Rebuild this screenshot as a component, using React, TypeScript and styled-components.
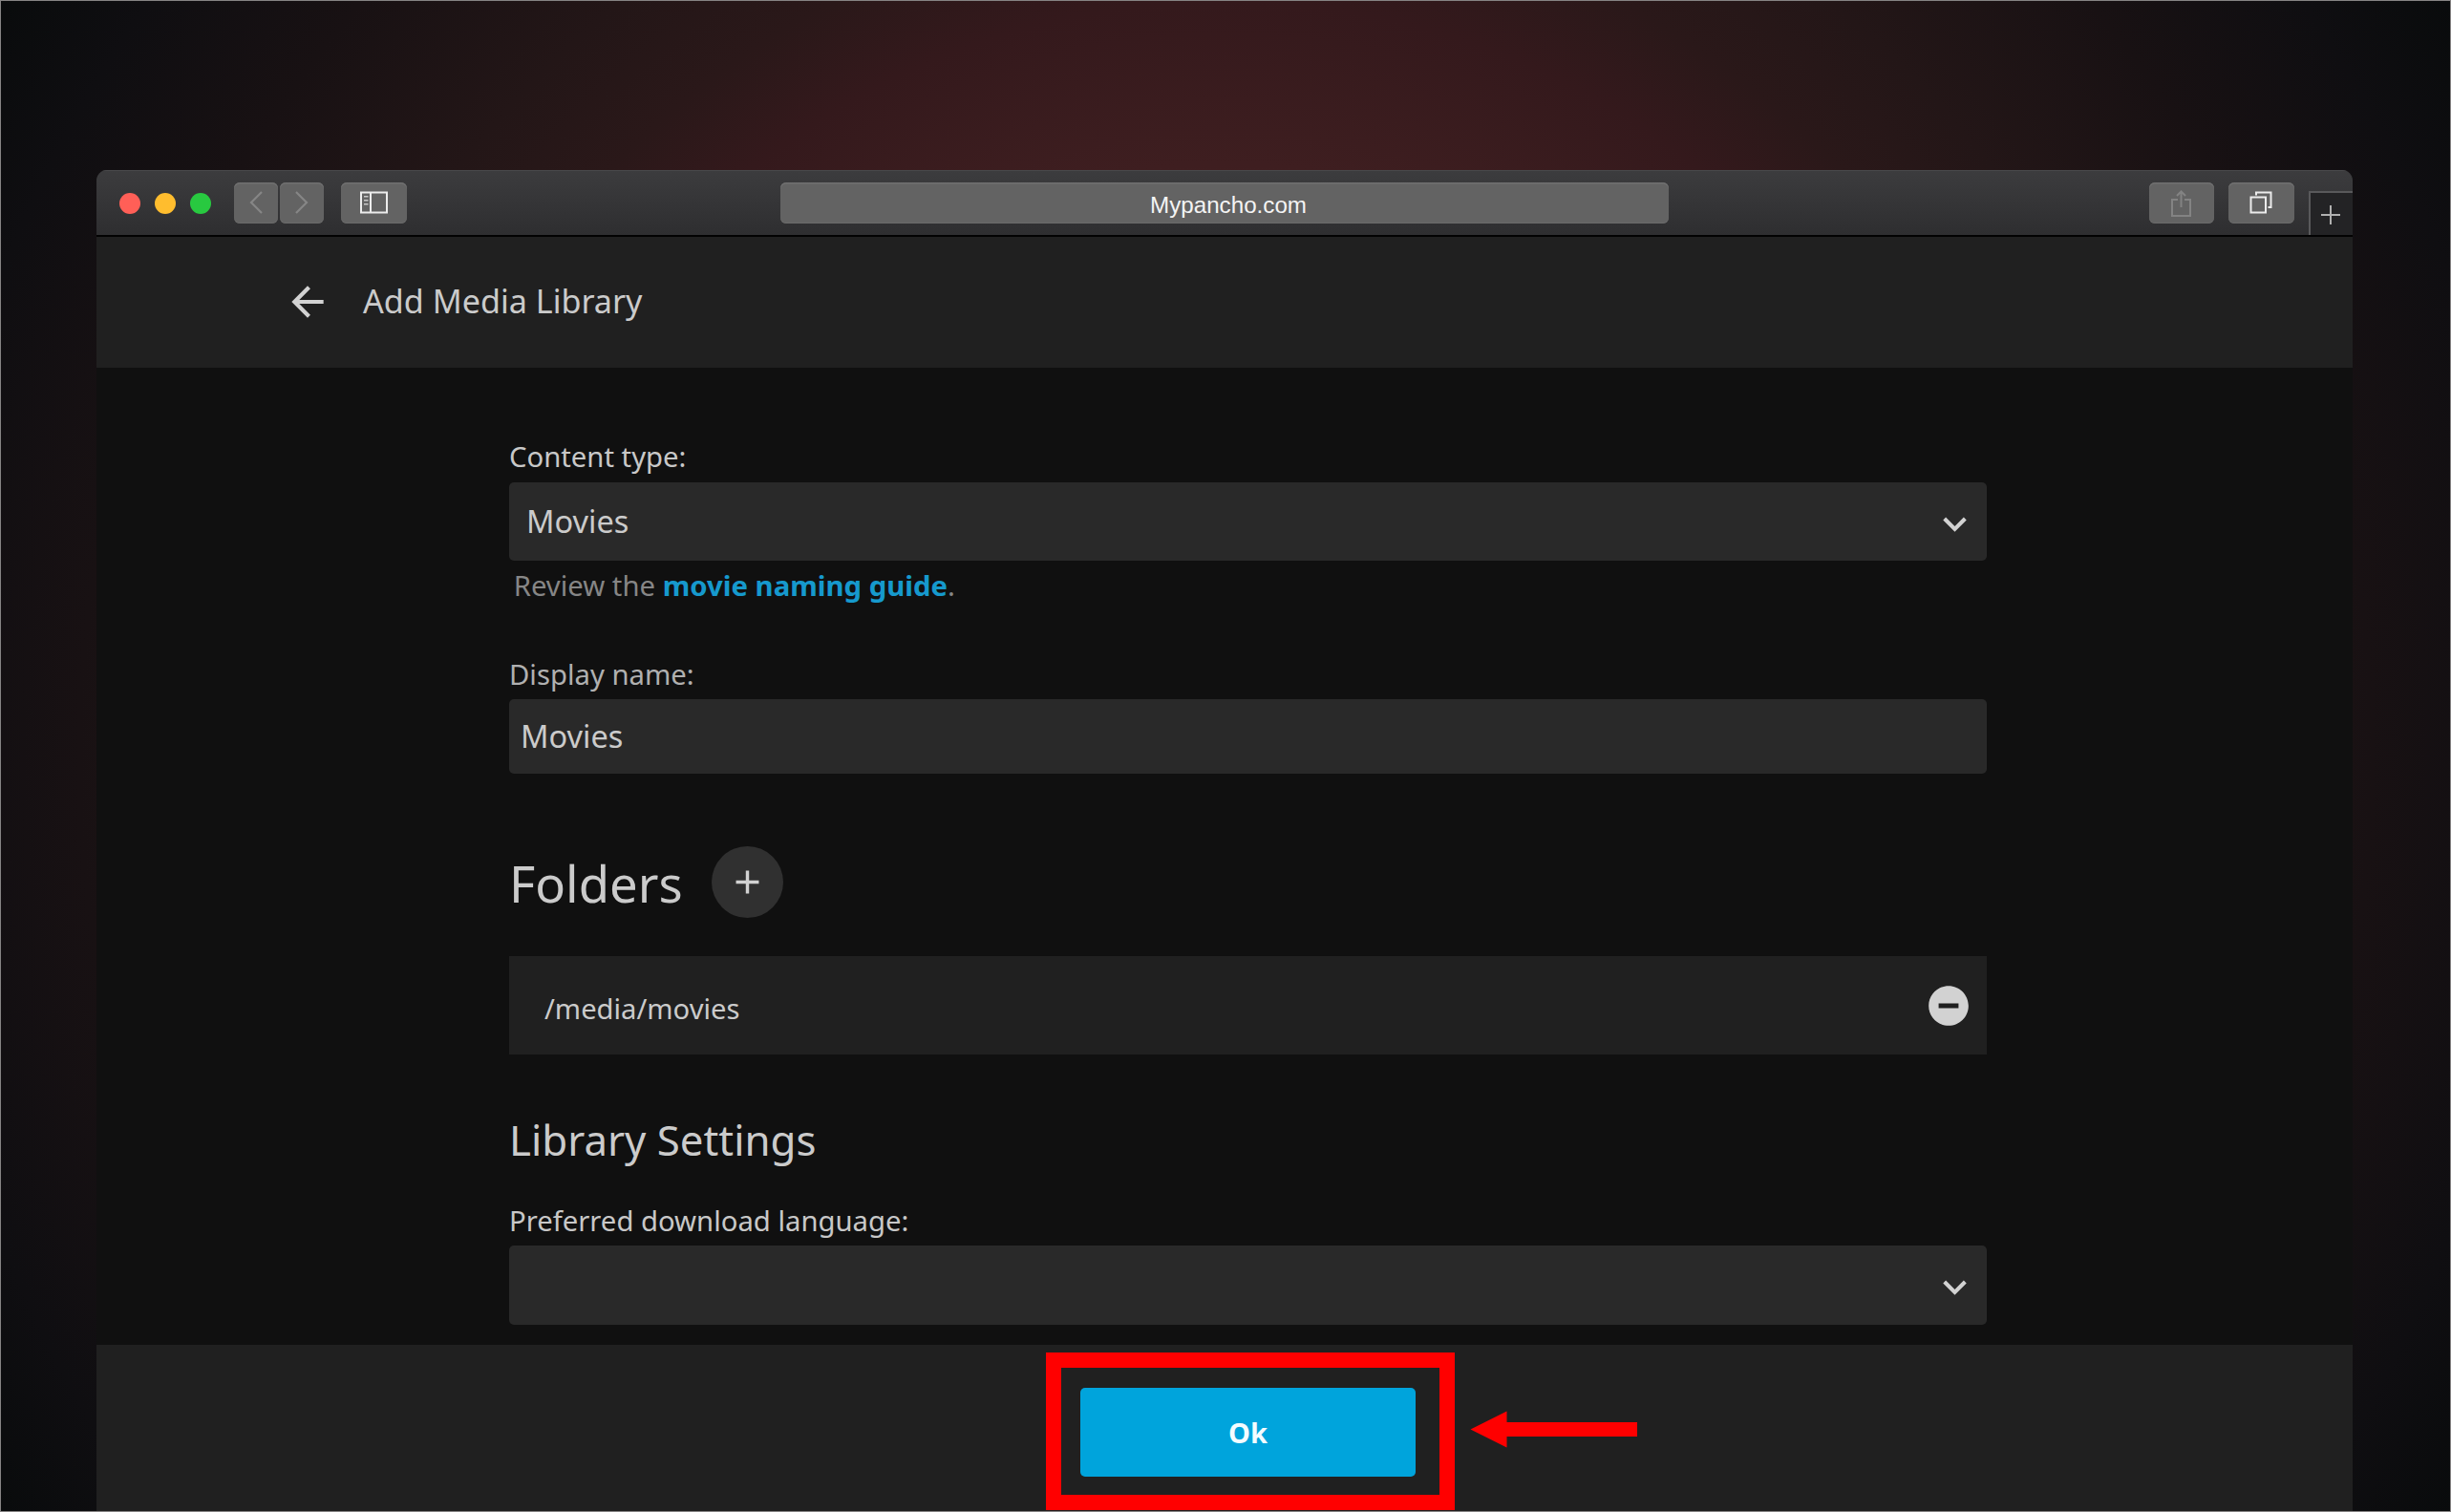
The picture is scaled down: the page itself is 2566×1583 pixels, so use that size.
import React from 'react';
import styled, { createGlobalStyle } from 'styled-components';

const GlobalStyle = createGlobalStyle`
  *, *::before, *::after { box-sizing: border-box; }
  body {
    margin: 0;
    background: #0a0b0d;
    overflow: hidden;
    font-family: "Noto Sans", "Open Sans", sans-serif;
    color: #cbcbcb;
  }
`;

const Backdrop = styled.div`
  width: 2566px;
  height: 1583px;
  border: 1px solid #868484;
  padding: 177px 102px 0 100px;
  overflow: hidden;
  background: radial-gradient(
    circle at 50% 50%,
    #4a2226 420px,
    #3e1e20 620px,
    #34191c 790px,
    #2a1819 890px,
    #231617 1012px,
    #181113 1200px,
    #0f0e11 1377px,
    #090b0c 1507px
  );
`;

const BrowserWindow = styled.div`
  display: flex;
  flex-direction: column;
  width: 2361.5px;
  height: 1404px;
  border-radius: 11px 11px 0 0;
  overflow: hidden;
  background: #101010;
`;

const Toolbar = styled.div`
  display: flex;
  align-items: center;
  flex: none;
  height: 70px;
  padding-left: 24px;
  border-bottom: 2px solid #020202;
  background: linear-gradient(#3c3c3e, #2e2e30);
  box-shadow: inset 0 1px 0 #48484a;
`;

const TrafficLights = styled.div`
  display: flex;
  gap: 15px;
  margin: 2px 24px 0 0;
`;

const Light = styled.span<{ $color: string }>`
  width: 22px;
  height: 22px;
  border-radius: 50%;
  background: ${(p) => p.$color};
`;

const NavButtons = styled.div`
  display: flex;
  gap: 2px;
  margin-right: 18px;
`;

const ToolButton = styled.button<{ $width: number }>`
  display: flex;
  align-items: center;
  justify-content: center;
  width: ${(p) => p.$width}px;
  height: 43px;
  padding: 0;
  border: 0;
  border-radius: 6px;
  background: #636363;
  box-shadow: inset 0 1.5px 0 #707070, inset 0 -1px 0 #6a6a6a;
`;

const AddressBar = styled.div`
  width: 930px;
  height: 43px;
  margin-left: 391px;
  padding: 3px 0 0 8px;
  border-radius: 6px;
  background: #636363;
  box-shadow: inset 0 1.5px 0 #707070, inset 0 -1px 0 #6a6a6a;
  color: #f4f4f4;
  font: 24.2px/42px "Liberation Sans", Arial, sans-serif;
  text-align: center;
`;

const WindowActions = styled.div`
  display: flex;
  gap: 15px;
  margin-left: auto;
  margin-right: 15px;
`;

const NewTab = styled.div`
  display: flex;
  align-items: center;
  justify-content: center;
  align-self: flex-end;
  width: 46px;
  height: 46px;
  border-top: 2px solid #59595b;
  border-left: 2px solid #59595b;
  background: #232325;
  padding: 2px 2px 0 0;
`;

const PageHeader = styled.header`
  display: flex;
  align-items: center;
  flex: none;
  height: 137px;
  padding: 0 0 1px 196px;
  background: #202020;
`;

const PageTitle = styled.h1`
  margin: 0 0 3px 33px;
  font-size: 34.15px;
  font-weight: 400;
  line-height: 47px;
`;

const Form = styled.main`
  display: flex;
  flex-direction: column;
  flex: none;
  width: 1979px;
  height: 1023px;
  padding: 73px 0 0 432px;
`;

const Label = styled.label<{ $gap?: number; $dim?: boolean }>`
  height: 40px;
  margin-bottom: ${(p) => p.$gap ?? 6}px;
  font-size: 29.28px;
  line-height: 40px;
  color: ${(p) => (p.$dim ? '#b0b0b0' : '#c8c8c8')};
`;

const Field = styled.div<{ $height: number; $indent: number }>`
  display: flex;
  align-items: center;
  justify-content: space-between;
  height: ${(p) => p.$height}px;
  padding: 0 9px 1px ${(p) => p.$indent}px;
  border-radius: 5px;
  background: #292929;
  font-size: 32.5px;
`;

const ChevronBox = styled.span`
  display: flex;
  margin: 5px 0 0 auto;
`;

const HelpText = styled.p`
  height: 40px;
  margin: 6px 0 53px;
  padding-left: 4.7px;
  font-size: 29.3px;
  line-height: 40px;
  color: #868686;
`;

const GuideLink = styled.a`
  color: #1699cd;
  font-weight: 700;
`;

const SectionHeader = styled.div`
  display: flex;
  height: 75px;
  margin: 76px 0 40px;
`;

const SectionTitle = styled.h2`
  margin: 1px 30px 0 0;
  font-size: 52.6px;
  font-weight: 400;
  line-height: 75px;
`;

const RoundButton = styled.button`
  display: flex;
  align-items: center;
  justify-content: center;
  width: 75px;
  height: 75px;
  padding: 0;
  border: 0;
  border-radius: 50%;
  background: #303030;
`;

const FolderRow = styled.div`
  display: flex;
  align-items: center;
  justify-content: space-between;
  height: 103px;
  padding: 0 15.500px 0 37px;
  background: #202020;
`;

const FolderPath = styled.span`
  padding-top: 6px;
  font-size: 29.2px;
  line-height: 40px;
`;

const SubTitle = styled.h3`
  height: 60px;
  margin: 59px 0 35px;
  font-size: 43.8px;
  font-weight: 400;
  line-height: 60px;
`;

const Footer = styled.footer`
  display: flex;
  flex: 1;
  padding: 8px 0 0 994px;
  background: #202020;
`;

const Highlight = styled.div`
  width: 427.500px;
  height: 165px;
  padding: 21px 0 0 20px;
  border: 16px solid #ff0000;
`;

const OkButton = styled.button`
  display: block;
  width: 351px;
  height: 93px;
  padding: 0;
  border: 0;
  border-radius: 5px;
  background: #00a4dc;
  color: #f4fcff;
  font: 700 29px/40px "Noto Sans", sans-serif;
`;

const Pointer = styled.svg`
  margin: 61px 0 0 16px;
`;

const MaterialIcon = ({ size, d, fill = '#d2d2d2' }: { size: number; d: string; fill?: string }) => (
  <svg width={size} height={size} viewBox="0 0 24 24" fill={fill}>
    <path d={d} />
  </svg>
);

const Chevron = () => (
  <ChevronBox>
    <MaterialIcon size={49} d="M7.41 8.59 12 13.17l4.59-4.58L18 10l-6 6-6-6z" />
  </ChevronBox>
);

const NavArrow = ({ d }: { d: string }) => (
  <svg width="16" height="26" viewBox="0 0 16 26" fill="none" stroke="#868686" strokeWidth="2.2">
    <path d={d} />
  </svg>
);

export default function App() {
  return (
    <>
      <GlobalStyle />
      <Backdrop>
        <BrowserWindow>
          <Toolbar>
            <TrafficLights>
              <Light $color="#ff5f57" />
              <Light $color="#ffbd2e" />
              <Light $color="#28c940" />
            </TrafficLights>
            <NavButtons>
              <ToolButton $width={46}>
                <NavArrow d="M14 2 3 13l11 11" />
              </ToolButton>
              <ToolButton $width={46}>
                <NavArrow d="M2 2l11 11L2 24" />
              </ToolButton>
            </NavButtons>
            <ToolButton $width={69}>
              <svg width="29" height="24" viewBox="0 0 29 24" fill="none" stroke="#ececec">
                <path strokeWidth="2" d="M1 1.5h27v21H1zM11 1.5v21" />
                <path strokeWidth="1.5" stroke="#c9c9c9" d="M4 5.7h4.5M4 9.7h4.5M4 13.7h4.5" />
              </svg>
            </ToolButton>
            <AddressBar>Mypancho.com</AddressBar>
            <WindowActions>
              <ToolButton $width={68}>
                <svg width="23" height="30" viewBox="0 0 23 30" fill="none" stroke="#838383" strokeWidth="2">
                  <path d="M8 12H2v17h19V12h-6M11.5 20V3.5M7 8l4.5-4.5L16 8" />
                </svg>
              </ToolButton>
              <ToolButton $width={69}>
                <svg width="24" height="24" viewBox="0 0 24 24" fill="none" stroke="#ececec" strokeWidth="2">
                  <rect x="1.5" y="6.5" width="15.5" height="16" />
                  <path d="M7 4.5V1.500h15.500V17H19.500" />
                </svg>
              </ToolButton>
            </WindowActions>
            <NewTab>
              <svg width="20" height="20" viewBox="0 0 20 20" stroke="#b0b0b0" strokeWidth="2">
                <path d="M10 0v20M0 10h20" />
              </svg>
            </NewTab>
          </Toolbar>

          <PageHeader>
            <MaterialIcon size={50} d="M20 11H7.83l5.59-5.59L12 4l-8 8 8 8 1.41-1.41L7.83 13H20v-2z" />
            <PageTitle>Add Media Library</PageTitle>
          </PageHeader>

          <Form>
            <Label $gap={7}>Content type:</Label>
            <Field $height={82} $indent={18}>
              Movies
              <Chevron />
            </Field>
            <HelpText>
              Review the <GuideLink>movie naming guide</GuideLink>.
            </HelpText>

            <Label $dim>Display name:</Label>
            <Field $height={78} $indent={12}>
              Movies
            </Field>

            <SectionHeader>
              <SectionTitle>Folders</SectionTitle>
              <RoundButton>
                <MaterialIcon size={41} d="M19 13h-6v6h-2v-6H5v-2h6V5h2v6h6v2z" />
              </RoundButton>
            </SectionHeader>
            <FolderRow>
              <FolderPath>/media/movies</FolderPath>
              <MaterialIcon
                size={50}
                d="M12 2C6.48 2 2 6.48 2 12s4.48 10 10 10 10-4.48 10-10S17.52 2 12 2zm5 11.25H7v-2.5h10v2.5z"
              />
            </FolderRow>

            <SubTitle>Library Settings</SubTitle>
            <Label>Preferred download language:</Label>
            <Field $height={83} $indent={18}>
              <Chevron />
            </Field>
          </Form>

          <Footer>
            <Highlight>
              <OkButton>Ok</OkButton>
            </Highlight>
            <Pointer width="176" height="40" viewBox="0 0 176 40" fill="#ff0000">
              <path d="M0.5 19.500 38.5 0.500v11.500H175v15H38.500V38.500z" />
            </Pointer>
          </Footer>
        </BrowserWindow>
      </Backdrop>
    </>
  );
}
